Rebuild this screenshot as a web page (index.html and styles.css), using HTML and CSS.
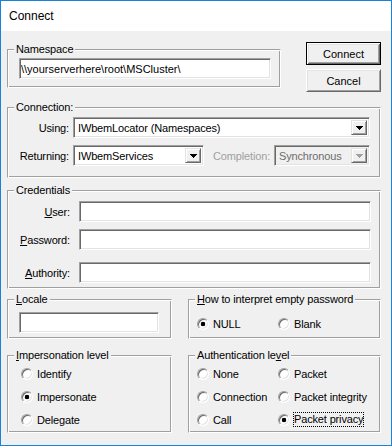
FILE: index.html
```html
<!DOCTYPE html>
<html lang="en">

<head>
  <meta charset="UTF-8">
  <title>Connect</title>
  <link rel="stylesheet" href="styles.css">
</head>

<body>
  <div class="window">
    <div class="titlebar">Connect</div>
    <div class="client">

      <div class="row-top">
        <fieldset class="group ns">
          <legend>Namespace</legend>
          <input class="edit ns-edit" type="text" value="\\yourserverhere\root\MSCluster\">
        </fieldset>
        <div class="buttons">
          <button class="btn default">Connect</button>
          <button class="btn">Cancel</button>
        </div>
      </div>

      <fieldset class="group conn">
        <legend>Connection:</legend>
        <div class="field-row">
          <span class="lbl">Using:</span>
          <div class="combo using">
            <span class="combo-text">IWbemLocator (Namespaces)</span>
            <span class="drop"><svg width="7" height="4" viewBox="0 0 7 4"><path d="M0 0h7v1H0zM1 1h5v1H1zM2 2h3v1H2zM3 3h1v1H3z" /></svg></span>
          </div>
        </div>
        <div class="field-row second">
          <span class="lbl">Returning:</span>
          <div class="combo returning">
            <span class="combo-text">IWbemServices</span>
            <span class="drop"><svg width="7" height="4" viewBox="0 0 7 4"><path d="M0 0h7v1H0zM1 1h5v1H1zM2 2h3v1H2zM3 3h1v1H3z" /></svg></span>
          </div>
          <span class="lbl-off">Completion:</span>
          <div class="combo disabled completion">
            <span class="combo-text">Synchronous</span>
            <span class="drop"><svg width="7" height="4" viewBox="0 0 7 4"><path d="M0 0h7v1H0zM1 1h5v1H1zM2 2h3v1H2zM3 3h1v1H3z" /></svg></span>
          </div>
        </div>
      </fieldset>

      <fieldset class="group cred">
        <legend>Credentials</legend>
        <div class="cred-row">
          <label class="lbl-c"><u>U</u>ser:</label>
          <input class="edit cred-edit" type="text" value="">
        </div>
        <div class="cred-row r2">
          <label class="lbl-c"><u>P</u>assword:</label>
          <input class="edit cred-edit" type="password" value="">
        </div>
        <div class="cred-row r3">
          <label class="lbl-c"><u>A</u>uthority:</label>
          <input class="edit cred-edit" type="text" value="">
        </div>
      </fieldset>

      <div class="row-pair mid">
        <fieldset class="group locale">
          <legend><u>L</u>ocale</legend>
          <input class="edit locale-edit" type="text" value="">
        </fieldset>
        <fieldset class="group empty-pw">
          <legend><u>H</u>ow to interpret empty password</legend>
          <div class="radio-grid">
            <div class="opt"><span class="radio on"></span><span>NULL</span></div>
            <div class="opt"><span class="radio"></span><span>Blank</span></div>
          </div>
        </fieldset>
      </div>

      <div class="row-pair bottom">
        <fieldset class="group imp">
          <legend><u>I</u>mpersonation level</legend>
          <div class="radio-col">
            <div class="opt"><span class="radio"></span><span>Identify</span></div>
            <div class="opt"><span class="radio on"></span><span>Impersonate</span></div>
            <div class="opt"><span class="radio"></span><span>Delegate</span></div>
          </div>
        </fieldset>
        <fieldset class="group auth">
          <legend>Authentication le<u>v</u>el</legend>
          <div class="radio-grid">
            <div class="opt"><span class="radio"></span><span>None</span></div>
            <div class="opt"><span class="radio"></span><span>Packet</span></div>
            <div class="opt"><span class="radio"></span><span>Connection</span></div>
            <div class="opt"><span class="radio"></span><span>Packet integrity</span></div>
            <div class="opt"><span class="radio"></span><span>Call</span></div>
            <div class="opt"><span class="radio on"></span><span class="focus">Packet privacy</span></div>
          </div>
        </fieldset>
      </div>

    </div>
  </div>
</body>

</html>
```

FILE: styles.css
```css
* {
  box-sizing: border-box;
}

body {
  margin: 0;
  font: 11px "Liberation Sans", Arial, sans-serif;
  letter-spacing: -0.15px;
  color: #000;
}

.window {
  width: 392px;
  height: 446px;
  border: 1px solid #1883d7;
  background: #f0f0f0;
}

.titlebar {
  height: 30px;
  line-height: 30px;
  padding-left: 8px;
  background: #fff;
  font-size: 12px;
  letter-spacing: 0;
}

.client {
  padding: 11px 10px 0 6px;
}

/* group boxes (etched look) - no side padding, the legend would move with it */
.group {
  margin: 0;
  padding: 0;
  min-width: 0;
  border: 1px solid;
  border-color: #a0a0a0 #fff #fff #a0a0a0;
  box-shadow: inset 1px 1px #fff, inset -1px -1px #a0a0a0;
}

.group legend {
  margin-left: 6px;
  padding: 0 2px;
  line-height: 13px;
  background: #f0f0f0;
}

/* sunken edit field */
.edit {
  display: block;
  height: 21px;
  margin: 0;
  padding: 0 1px;
  font: inherit;
  color: #000;
  background: #fff;
  border: 1px solid;
  border-color: #a0a0a0 #fff #fff #a0a0a0;
  box-shadow: inset 1px 1px #696969, inset -1px -1px #e3e3e3;
  outline: none;
}

/* top row */
.row-top {
  display: grid;
  grid-template-columns: 274px 75px;
  column-gap: 25px;
  align-items: start;
}

.ns {
  margin-top: 1px;
  height: 45px;
}

.ns-edit {
  margin: 2px 0 0 11px;
  width: 252px;
}

.buttons {
  display: flex;
  flex-direction: column;
  gap: 4px;
}

.btn {
  height: 23px;
  width: 75px;
  padding: 0;
  font: inherit;
  color: #000;
  background: #f0f0f0;
  border: 1px solid;
  border-color: #fff #696969 #696969 #fff;
  box-shadow: inset 1px 1px #e3e3e3, inset -1px -1px #a0a0a0;
}

.btn.default {
  border-color: #000;
  box-shadow: inset 1px 1px #fff, inset -1px -1px #696969, inset 2px 2px #e3e3e3, inset -2px -2px #a0a0a0;
}

/* connection */
.conn {
  margin-top: 9px;
  height: 77px;
  padding: 3px 10px 0 0;
}

.field-row {
  display: flex;
  align-items: center;
}

.field-row.second {
  margin-top: 7px;
}

.lbl {
  width: 61px;
  margin-right: 4px;
  text-align: right;
}

.lbl-off {
  margin-left: 9px;
  color: #a0a0a0;
}

.combo {
  display: flex;
  align-items: stretch;
  height: 21px;
  padding: 2px;
  background: #fff;
  border: 1px solid;
  border-color: #a0a0a0 #fff #fff #a0a0a0;
  box-shadow: inset 1px 1px #696969, inset -1px -1px #e3e3e3;
}

.combo.using {
  width: 297px;
}

.combo.returning {
  width: 131px;
}

.combo.completion {
  width: 96px;
  margin-left: auto;
}

.combo-text {
  flex: 1;
  padding-left: 2px;
  line-height: 17px;
  white-space: nowrap;
  overflow: hidden;
}

.drop {
  display: flex;
  align-items: center;
  justify-content: center;
  width: 16px;
  background: #f0f0f0;
  border: 1px solid;
  border-color: #e3e3e3 #696969 #696969 #e3e3e3;
  box-shadow: inset 1px 1px #fff, inset -1px -1px #a0a0a0;
}

.drop svg {
  display: block;
  fill: #000;
}

.combo.disabled {
  background: #f0f0f0;
  color: #6d6d6d;
}

.combo.disabled .drop svg {
  fill: #a0a0a0;
}

/* credentials */
.cred {
  margin-top: 6px;
  height: 105px;
  padding-top: 4px;
}

.cred-row {
  display: flex;
  align-items: center;
}

.cred-row.r2 {
  margin-top: 7px;
}

.cred-row.r3 {
  margin-top: 12px;
}

.lbl-c {
  width: 62px;
  margin-right: 9px;
  text-align: right;
}

.cred-edit {
  width: 292px;
}

/* paired groups */
.row-pair {
  display: grid;
  grid-template-columns: 165px 193px;
  column-gap: 16px;
}

.row-pair.mid {
  margin-top: 4px;
}

.row-pair.bottom {
  margin-top: 10px;
}

.locale,
.empty-pw {
  height: 46px;
}

.locale {
  padding-top: 6px;
}

.locale-edit {
  margin-left: 11px;
  width: 140px;
}

.empty-pw {
  padding-top: 11px;
}

.empty-pw .radio-grid,
.auth .radio-grid {
  margin-left: 8px;
}

.imp,
.auth {
  height: 84px;
  padding-top: 5px;
}

.imp .radio-col {
  margin-left: 13px;
}

.radio-grid {
  display: grid;
  grid-template-columns: 81px auto;
  row-gap: 10px;
}

.radio-col {
  display: flex;
  flex-direction: column;
  gap: 10px;
}

.opt {
  display: flex;
  align-items: center;
  height: 13px;
  white-space: nowrap;
}

.radio {
  flex: none;
  width: 12px;
  height: 12px;
  margin-right: 4px;
  border-radius: 50%;
  background: #fff;
  border: 1px solid;
  border-color: #a0a0a0 #fff #fff #a0a0a0;
  box-shadow: inset 1px 1px #696969, inset -1px -1px #e3e3e3;
}

.radio.on {
  background: radial-gradient(circle, #000 0, #000 2px, #fff 2.6px);
}

.focus {
  margin-left: -1px;
  border: 1px dotted #000;
  line-height: 13px;
}
```
